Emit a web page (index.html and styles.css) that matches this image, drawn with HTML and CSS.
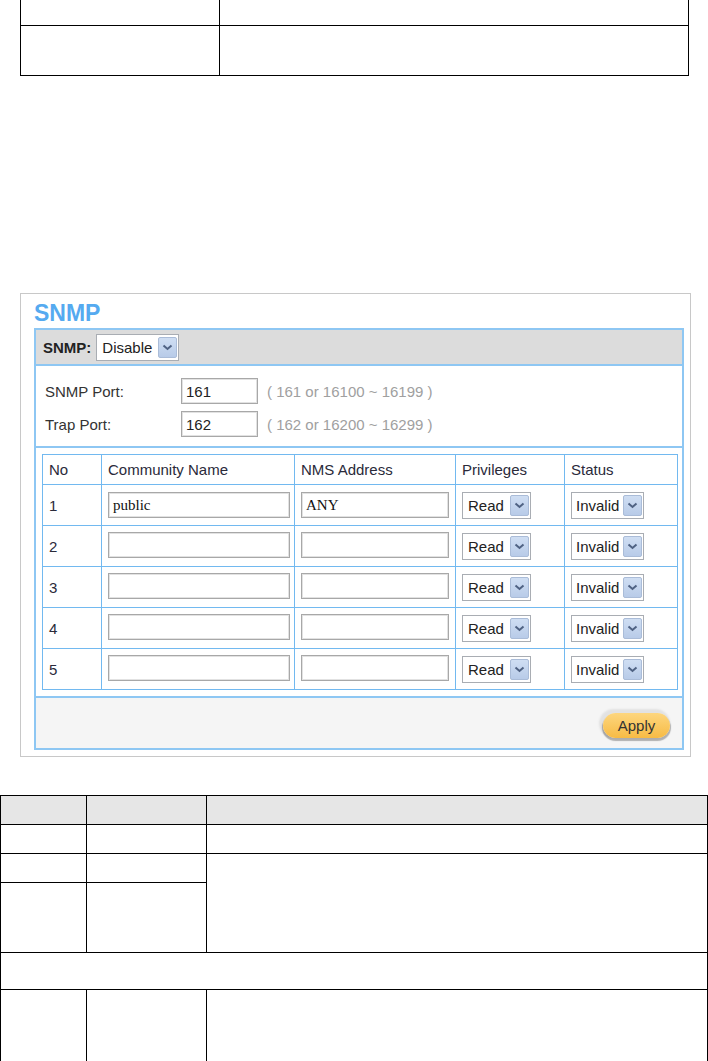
FILE: index.html
```html
<!DOCTYPE html>
<html>
<head>
<meta charset="utf-8">
<link rel="stylesheet" href="styles.css">
</head>
<body>
<table class="doc-table top-table">
  <tr class="r1"><td class="c1"></td><td></td></tr>
  <tr class="r2"><td class="c1"></td><td></td></tr>
</table>

<div class="panel">
  <div class="title">SNMP</div>
  <div class="box">
    <div class="bar">
      <span class="bar-label">SNMP:</span>
      <div class="select sel-disable"><span class="val">Disable</span><span class="arrow"><svg width="11" height="7" viewBox="0 0 11 7"><path d="M1.5 1.5 L5.5 5 L9.5 1.5" fill="none" stroke="#4f6283" stroke-width="2"/></svg></span></div>
    </div>
    <div class="ports">
      <div class="port-row"><span class="port-label">SNMP Port:</span><span class="textbox port-input">161</span><span class="hint">( 161 or 16100 ~ 16199 )</span></div>
      <div class="port-row"><span class="port-label">Trap Port:</span><span class="textbox port-input">162</span><span class="hint">( 162 or 16200 ~ 16299 )</span></div>
    </div>
    <div class="table-wrap">
      <table class="comm">
        <thead>
          <tr><th class="w-no">No</th><th class="w-name">Community Name</th><th class="w-nms">NMS Address</th><th class="w-priv">Privileges</th><th class="w-status">Status</th></tr>
        </thead>
        <tbody>
          <tr><td>1</td><td><span class="textbox in-name serif">public</span></td><td><span class="textbox in-nms serif">ANY</span></td>
            <td><div class="select sel-read"><span class="val">Read</span><span class="arrow"><svg width="11" height="7" viewBox="0 0 11 7"><path d="M1.5 1.5 L5.5 5 L9.5 1.5" fill="none" stroke="#4f6283" stroke-width="2"/></svg></span></div></td>
            <td><div class="select sel-status"><span class="val">Invalid</span><span class="arrow"><svg width="11" height="7" viewBox="0 0 11 7"><path d="M1.5 1.5 L5.5 5 L9.5 1.5" fill="none" stroke="#4f6283" stroke-width="2"/></svg></span></div></td></tr>
          <tr><td>2</td><td><span class="textbox in-name"></span></td><td><span class="textbox in-nms"></span></td>
            <td><div class="select sel-read"><span class="val">Read</span><span class="arrow"><svg width="11" height="7" viewBox="0 0 11 7"><path d="M1.5 1.5 L5.5 5 L9.5 1.5" fill="none" stroke="#4f6283" stroke-width="2"/></svg></span></div></td>
            <td><div class="select sel-status"><span class="val">Invalid</span><span class="arrow"><svg width="11" height="7" viewBox="0 0 11 7"><path d="M1.5 1.5 L5.5 5 L9.5 1.5" fill="none" stroke="#4f6283" stroke-width="2"/></svg></span></div></td></tr>
          <tr><td>3</td><td><span class="textbox in-name"></span></td><td><span class="textbox in-nms"></span></td>
            <td><div class="select sel-read"><span class="val">Read</span><span class="arrow"><svg width="11" height="7" viewBox="0 0 11 7"><path d="M1.5 1.5 L5.5 5 L9.5 1.5" fill="none" stroke="#4f6283" stroke-width="2"/></svg></span></div></td>
            <td><div class="select sel-status"><span class="val">Invalid</span><span class="arrow"><svg width="11" height="7" viewBox="0 0 11 7"><path d="M1.5 1.5 L5.5 5 L9.5 1.5" fill="none" stroke="#4f6283" stroke-width="2"/></svg></span></div></td></tr>
          <tr><td>4</td><td><span class="textbox in-name"></span></td><td><span class="textbox in-nms"></span></td>
            <td><div class="select sel-read"><span class="val">Read</span><span class="arrow"><svg width="11" height="7" viewBox="0 0 11 7"><path d="M1.5 1.5 L5.5 5 L9.5 1.5" fill="none" stroke="#4f6283" stroke-width="2"/></svg></span></div></td>
            <td><div class="select sel-status"><span class="val">Invalid</span><span class="arrow"><svg width="11" height="7" viewBox="0 0 11 7"><path d="M1.5 1.5 L5.5 5 L9.5 1.5" fill="none" stroke="#4f6283" stroke-width="2"/></svg></span></div></td></tr>
          <tr><td>5</td><td><span class="textbox in-name"></span></td><td><span class="textbox in-nms"></span></td>
            <td><div class="select sel-read"><span class="val">Read</span><span class="arrow"><svg width="11" height="7" viewBox="0 0 11 7"><path d="M1.5 1.5 L5.5 5 L9.5 1.5" fill="none" stroke="#4f6283" stroke-width="2"/></svg></span></div></td>
            <td><div class="select sel-status"><span class="val">Invalid</span><span class="arrow"><svg width="11" height="7" viewBox="0 0 11 7"><path d="M1.5 1.5 L5.5 5 L9.5 1.5" fill="none" stroke="#4f6283" stroke-width="2"/></svg></span></div></td></tr>
        </tbody>
      </table>
    </div>
    <div class="footer">
      <span class="apply">Apply</span>
    </div>
  </div>
</div>

<table class="doc-table bottom-table">
  <tr class="b-head"><td class="bc1"></td><td class="bc2"></td><td></td></tr>
  <tr class="b-r1"><td></td><td></td><td></td></tr>
  <tr class="b-r2"><td></td><td></td><td rowspan="2"></td></tr>
  <tr class="b-r3"><td></td><td></td></tr>
  <tr class="b-r4"><td colspan="3"></td></tr>
  <tr class="b-r5"><td></td><td></td><td></td></tr>
</table>
</body>
</html>
```

FILE: styles.css
```css
html, body {
  margin: 0;
  padding: 0;
  background: #fff;
}
body {
  font-family: "Liberation Sans", Arial, sans-serif;
  color: #222;
}

/* document tables */
.doc-table {
  border-collapse: collapse;
  table-layout: fixed;
}
.doc-table td {
  border: 1px solid #000;
  padding: 0;
}
.top-table {
  margin: -1px 0 0 20px;
  width: 669px;
}
.top-table .c1 { width: 198px; }
.top-table .r1 td { height: 25px; }
.top-table .r2 td { height: 49px; }

.bottom-table {
  margin: 38px 0 0 0;
  width: 708px;
}
.bottom-table .bc1 { width: 85px; }
.bottom-table .bc2 { width: 119px; }
.bottom-table .b-head td { background: #e6e6e6; height: 28px; }
.bottom-table .b-r1 td { height: 28px; }
.bottom-table .b-r2 td { height: 28px; }
.bottom-table .b-r3 td { height: 69px; }
.bottom-table .b-r4 td { height: 36px; }
.bottom-table .b-r5 td { height: 72px; }

/* SNMP panel */
.panel {
  margin: 217px 0 0 20px;
  width: 671px;
  box-sizing: border-box;
  border: 1px solid #c8c8c8;
  padding: 7px 6px 6px 13px;
}
.title {
  font-size: 23px;
  font-weight: bold;
  color: #55aaf0;
  line-height: 25px;
  margin-bottom: 2px;
}
.box {
  border: 2px solid #8ec7f3;
}
.bar {
  background: #dcdcdc;
  height: 34px;
  display: flex;
  align-items: center;
  padding-left: 7px;
  border-bottom: 2px solid #8ec7f3;
}
.bar-label {
  font-size: 15px;
  font-weight: bold;
  color: #222;
  margin-right: 5px;
}

/* select */
.select {
  display: inline-flex;
  align-items: center;
  box-sizing: border-box;
  height: 27px;
  background: #fff;
  border: 1px solid #a9adb3;
  padding: 2px 1px 2px 2px;
  font-size: 15px;
  color: #222;
}
.select .val {
  flex: 1 1 auto;
  padding-left: 3px;
  white-space: nowrap;
}
.select .arrow {
  flex: 0 0 auto;
  width: 19px;
  height: 21px;
  box-sizing: border-box;
  border: 1px solid #aabcd8;
  border-radius: 2px;
  background: linear-gradient(#cfdef3, #b8cbe8);
  display: flex;
  align-items: center;
  justify-content: center;
}
.sel-disable { width: 83px; }
.sel-read { width: 69px; }
.sel-status { width: 73px; }
.sel-status .val { padding-left: 2px; }

/* port rows */
.ports {
  display: flex;
  flex-direction: column;
  gap: 7px;
  padding: 12px 0 9px 9px;
  border-bottom: 2px solid #8ec7f3;
}
.port-row {
  display: flex;
  align-items: center;
  font-size: 15px;
}
.port-label {
  width: 136px;
  color: #333;
}
.textbox {
  display: inline-flex;
  align-items: center;
  box-sizing: border-box;
  height: 26px;
  border: 1px solid #a8a8a8;
  box-shadow: inset 0 0 0 1px #e2e2e2;
  background: #fff;
  padding-left: 4px;
  font-size: 15px;
  color: #222;
}
.port-input {
  width: 77px;
  margin-right: 9px;
}
.hint {
  color: #a0a0a0;
}

/* community table */
.table-wrap {
  padding: 6px 5px 6px 6px;
}
.comm {
  border-collapse: collapse;
  table-layout: fixed;
  width: 635px;
  font-size: 15px;
}
.comm th, .comm td {
  border: 1px solid #72b9f0;
  text-align: left;
  padding: 0 6px;
  font-weight: normal;
  color: #2a2a3a;
}
.comm th { height: 29px; }
.comm td { height: 40px; }
.w-no { width: 46px; }
.w-name { width: 180px; }
.w-nms { width: 148px; }
.w-priv { width: 96px; }
.w-status { width: 100px; }
.in-name { width: 182px; }
.in-nms { width: 148px; }
.serif {
  font-family: "Liberation Serif", "Times New Roman", serif;
  font-size: 15px;
  color: #111;
}

/* footer */
.footer {
  background: #f5f5f5;
  border-top: 2px solid #8ec7f3;
  height: 50px;
  display: flex;
  align-items: center;
  justify-content: flex-end;
  padding-right: 12px;
}
.apply {
  display: inline-flex;
  align-items: center;
  justify-content: center;
  width: 67px;
  height: 25px;
  border-radius: 13px;
  background: linear-gradient(#fdd67e, #f7bb45);
  box-shadow: 0 2px 1px 1px rgba(0,0,0,0.28), -2px -2px 2px 2px #e2e2e2;
  font-size: 15px;
  color: #333;
  margin-top: 4px;
}
```
